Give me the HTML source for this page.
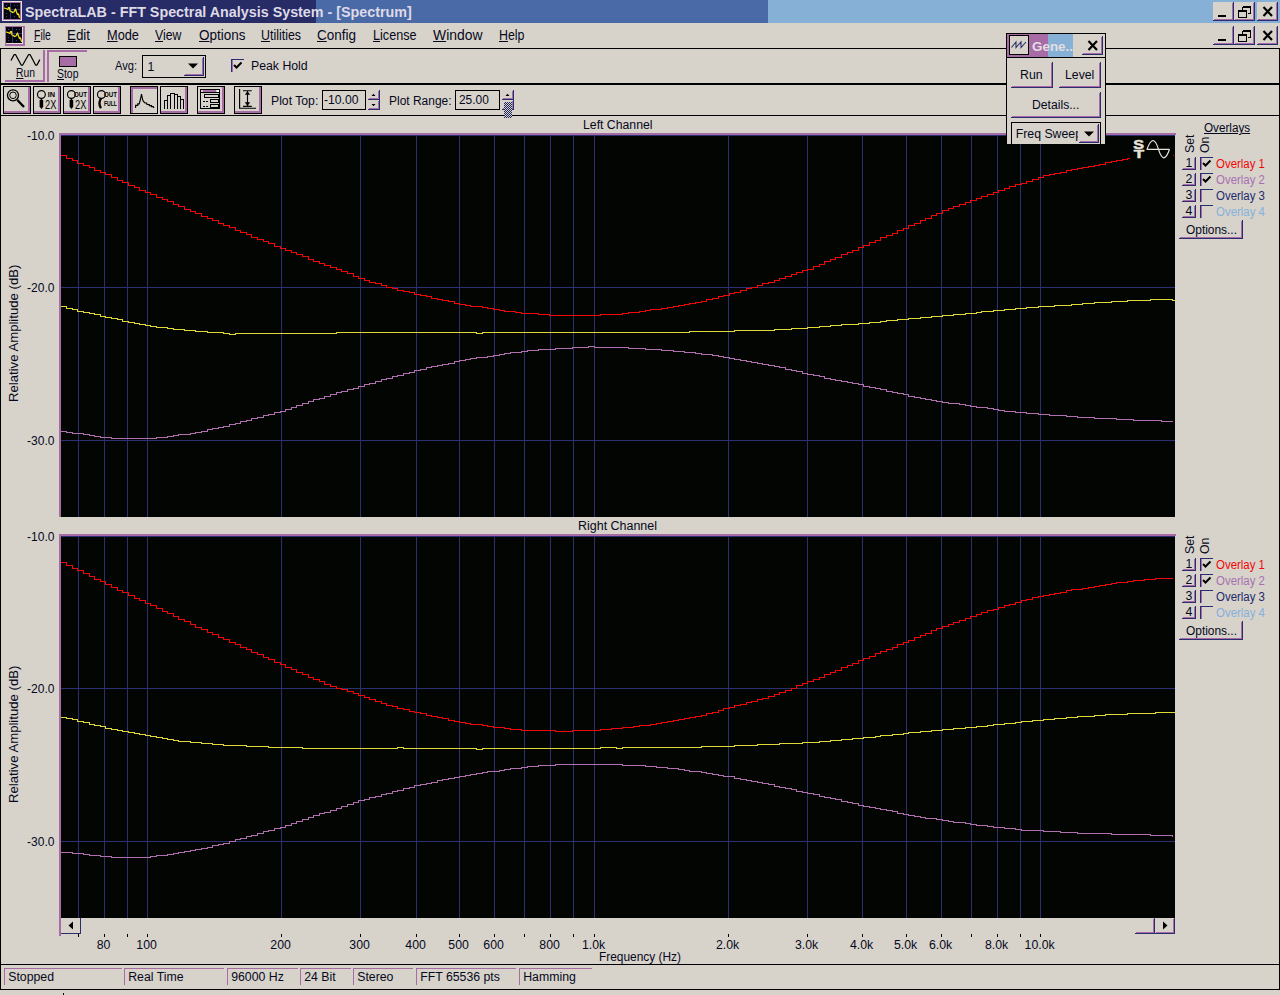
<!DOCTYPE html>
<html lang="en"><head><meta charset="utf-8"><title>SpectraLAB - FFT Spectral Analysis System - [Spectrum]</title>
<style>
html,body{margin:0;padding:0}
body{width:1280px;height:995px;overflow:hidden;background:#d7d3cb;font-family:"Liberation Sans",sans-serif;font-size:12px;color:#06081c;position:relative}
div,span,svg{position:absolute;box-sizing:border-box}
.t{white-space:nowrap;line-height:1}
u{text-decoration:underline;text-underline-offset:1px}
.hl{background:#000}
.btn{background:#d7d3cb;border-right:1px solid #2a2e6e;border-bottom:1px solid #2a2e6e}
.btn:before{content:"";position:absolute;right:0;bottom:0;left:1px;height:1px;background:#a76ba6}
.btn:after{content:"";position:absolute;right:0;bottom:0;top:1px;width:1px;background:#a76ba6}
.tb{border:1px solid #000;background:#d7d3cb}
.tb i{position:absolute;display:block}
.tb .r{right:0;top:0;bottom:0;width:2px;background:#a76ba6}
.tb .b{left:0;right:0;bottom:0;height:2px;background:#a76ba6}
.tb .l{left:0;top:0;bottom:0;width:2px;background:#a76ba6}
.tb .tp{left:0;right:0;top:0;height:2px;background:#a76ba6}
.sf{top:968px;height:17px;border-top:1px solid #a76ba6;border-left:1px solid #a76ba6}
.sf span{left:4px;top:3px;font-size:12.3px;white-space:nowrap;line-height:1}
.cb{width:13px;height:13px;border-top:1px solid #2a2e6e;border-left:1px solid #2a2e6e}
.cb:before{content:"";position:absolute;left:0;top:0;width:1px;height:12px;background:#a76ba6}
.plot{overflow:visible}
</style></head><body>

<div style="left:0;top:0;width:316px;height:23px;background:#272b66"></div>
<div style="left:316px;top:0;width:452px;height:23px;background:#4a69a7"></div>
<div style="left:768px;top:0;width:512px;height:23px;background:#86b0d5"></div>
<span class="t" style="left:25px;top:5px;font-size:14.6px;transform-origin:0 0;transform:scaleX(0.9808);font-weight:bold;color:#dedae6;">SpectraLAB - FFT Spectral Analysis System - [Spectrum]</span>
<svg style="left:2px;top:1px" width="20" height="20" viewBox="2 1 20 20"><rect x="2" y="1" width="20" height="20" fill="#e6e2d6"/><rect x="3" y="2" width="18" height="18" fill="#a76ba6"/><rect x="4" y="3" width="16" height="16" fill="#05050c"/><path d="M10.5 3V19M11 9.5H20" stroke="#2b3178" stroke-width="1"/><rect x="6" y="5" width="1" height="1" fill="#3a4494"/><rect x="14" y="5" width="1" height="1" fill="#3a4494"/><rect x="17" y="5" width="1" height="1" fill="#3a4494"/><rect x="6" y="13" width="1" height="1" fill="#3a4494"/><rect x="6" y="16" width="1" height="1" fill="#3a4494"/><rect x="14" y="16" width="1" height="1" fill="#3a4494"/><rect x="17" y="13" width="1" height="1" fill="#3a4494"/><path d="M4 8L6 8.5L8 9.5L8.5 7.5L9.5 7.5L10 11L11.5 11.5L12.5 12.5L14 12L15.5 9L16.5 12L17.5 14.5L18.5 14L19.6 17.8" stroke="#f4e428" stroke-width="1.250" fill="none" stroke-linejoin="round"/></svg>
<svg style="left:5px;top:26px" width="20" height="20" viewBox="5 26 20 20"><rect x="5" y="26" width="20" height="20" fill="#a76ba6"/><rect x="6" y="27" width="17" height="17" fill="#e6e2d6"/><rect x="6" y="27" width="16" height="16" fill="#05050c"/><path d="M12.5 27V43M13 33.5H22" stroke="#2b3178" stroke-width="1"/><rect x="8" y="29" width="1" height="1" fill="#3a4494"/><rect x="16" y="29" width="1" height="1" fill="#3a4494"/><rect x="19" y="29" width="1" height="1" fill="#3a4494"/><rect x="8" y="37" width="1" height="1" fill="#3a4494"/><rect x="8" y="40" width="1" height="1" fill="#3a4494"/><rect x="16" y="40" width="1" height="1" fill="#3a4494"/><rect x="19" y="37" width="1" height="1" fill="#3a4494"/><path d="M6 32L8 32.5L10 33.5L10.5 31.5L11.5 31.5L12 35L13.5 35.5L14.5 36.5L16 36L17.5 33L18.5 36L19.5 38.5L20.5 38L21.6 41.8" stroke="#f4e428" stroke-width="1.250" fill="none" stroke-linejoin="round"/></svg>
<div class="btn" style="left:1213px;top:2px;width:21px;height:19px"></div><div class="btn" style="left:1234px;top:2px;width:21px;height:19px"></div><div class="btn" style="left:1257px;top:2px;width:21px;height:19px"></div><div class="hl" style="left:1218px;top:15px;width:8px;height:2px"></div><svg style="left:1234px;top:2px" width="21" height="19" viewBox="0 0 21 19" shape-rendering="crispEdges"><path d="M8.500 4.500H16.500M8.500 5.500H16.500V11.500H13.500M8.500 5V8M4 8.500H13M4.500 9.500H12.500V15.500H4.500Z" stroke="#000" stroke-width="1" fill="none"/></svg><svg style="left:1257px;top:2px" width="21" height="19" viewBox="0 0 21 19"><path d="M6.5 5L15 14M15 5L6.5 14" stroke="#000" stroke-width="2.2" fill="none"/></svg>
<div class="btn" style="left:1213px;top:26px;width:21px;height:19px"></div><div class="btn" style="left:1234px;top:26px;width:21px;height:19px"></div><div class="btn" style="left:1257px;top:26px;width:21px;height:19px"></div><div class="hl" style="left:1218px;top:39px;width:8px;height:2px"></div><svg style="left:1234px;top:26px" width="21" height="19" viewBox="0 0 21 19" shape-rendering="crispEdges"><path d="M8.500 4.500H16.500M8.500 5.500H16.500V11.500H13.500M8.500 5V8M4 8.500H13M4.500 9.500H12.500V15.500H4.500Z" stroke="#000" stroke-width="1" fill="none"/></svg><svg style="left:1257px;top:26px" width="21" height="19" viewBox="0 0 21 19"><path d="M6.5 5L15 14M15 5L6.5 14" stroke="#000" stroke-width="2.2" fill="none"/></svg>
<span class="t" style="left:33.8px;top:29px;font-size:13.9px;transform-origin:0 0;transform:scaleX(0.7500);"><u>F</u>ile</span>
<span class="t" style="left:67px;top:29px;font-size:13.9px;transform-origin:0 0;transform:scaleX(0.9602);"><u>E</u>dit</span>
<span class="t" style="left:106.5px;top:29px;font-size:13.9px;transform-origin:0 0;transform:scaleX(0.9203);"><u>M</u>ode</span>
<span class="t" style="left:155px;top:29px;font-size:13.9px;transform-origin:0 0;transform:scaleX(0.8869);"><u>V</u>iew</span>
<span class="t" style="left:198.5px;top:29px;font-size:13.9px;transform-origin:0 0;transform:scaleX(0.9707);"><u>O</u>ptions</span>
<span class="t" style="left:261px;top:29px;font-size:13.9px;transform-origin:0 0;transform:scaleX(0.8929);"><u>U</u>tilities</span>
<span class="t" style="left:317px;top:29px;font-size:13.9px;transform-origin:0 0;transform:scaleX(0.9706);"><u>C</u>onfig</span>
<span class="t" style="left:372.5px;top:29px;font-size:13.9px;transform-origin:0 0;transform:scaleX(0.9079);"><u>L</u>icense</span>
<span class="t" style="left:432.5px;top:29px;font-size:13.9px;transform-origin:0 0;transform:scaleX(1.0012);"><u>W</u>indow</span>
<span class="t" style="left:498.5px;top:29px;font-size:13.9px;transform-origin:0 0;transform:scaleX(0.8920);"><u>H</u>elp</span>
<div class="hl" style="left:0;top:48px;width:1280px;height:1px"></div>
<div class="hl" style="left:0;top:48px;width:1px;height:942px"></div>
<div class="hl" style="left:1279px;top:48px;width:1px;height:942px"></div>
<div class="hl" style="left:0;top:83px;width:1280px;height:2px"></div>
<div class="hl" style="left:0;top:115px;width:1280px;height:1px"></div>
<div class="hl" style="left:0;top:964px;width:1280px;height:1px"></div>
<div class="hl" style="left:0;top:989px;width:1280px;height:1px"></div>
<div style="left:5px;top:50px;width:40px;height:32px;border-right:2px solid #a76ba6;border-bottom:2px solid #a76ba6"></div>
<svg style="left:8px;top:52px" width="34" height="16" viewBox="8 52 34 16"><path d="M11 60.500L14.200 54.500L15.500 54.500L21.200 65L22.700 65L28.600 54.500L30 54.500L35.600 65L37 65L39.800 59.600" stroke="#000" stroke-width="1.25" fill="none" stroke-linejoin="round"/></svg>
<span class="t" style="left:16px;top:67px;font-size:12.3px;transform-origin:0 0;transform:scaleX(0.8420);"><u>R</u>un</span>
<div style="left:47px;top:50px;width:40px;height:32px;border-left:2px solid #a76ba6;border-top:2px solid #a76ba6"></div>
<div style="left:59px;top:56px;width:18px;height:11px;background:#a76ba6;border:1px solid #000"></div>
<span class="t" style="left:56.5px;top:68px;font-size:12.3px;transform-origin:0 0;transform:scaleX(0.8497);"><u>S</u>top</span>
<span class="t" style="left:114.6px;top:60px;font-size:12.3px;transform-origin:0 0;transform:scaleX(0.9020);">Avg:</span>
<div style="left:142px;top:55px;width:64px;height:23px;border:1px solid #000"></div>
<span class="t" style="left:147.5px;top:61px;font-size:12.3px;">1</span>
<div class="btn" style="left:184px;top:57px;width:20px;height:19px"></div>
<svg style="left:186px;top:62px" width="14" height="8" viewBox="0 0 14 8"><path d="M2 1.5H12L7 6.5Z" fill="#000"/></svg>
<div class="cb" style="left:231px;top:59px"></div>
<svg style="left:233px;top:61px" width="10" height="10" viewBox="0 0 10 10"><path d="M1 4L3.5 6.5L8.5 1.5" stroke="#000" stroke-width="2" fill="none"/></svg>
<span class="t" style="left:251.3px;top:60px;font-size:12.3px;transform-origin:0 0;transform:scaleX(0.9991);">Peak Hold</span>
<div class="tb" style="left:3px;top:86px;width:28px;height:28px"><i class="r"></i><i class="b"></i><svg style="left:0;top:0" width="26" height="26" viewBox="4 87 26 26"><circle cx="13" cy="95.300" r="5.500" stroke="#000" stroke-width="1.3" fill="none"/><circle cx="13" cy="95.300" r="3.300" stroke="#000" stroke-width="1" fill="none"/><path d="M17.300 100L24 107" stroke="#000" stroke-width="2.400"/></svg></div>
<div class="tb" style="left:33px;top:86px;width:28px;height:28px"><i class="r"></i><i class="b"></i><svg style="left:0;top:0" width="26" height="26" viewBox="34 87 26 26"><circle cx="41.4" cy="94.500" r="3.900" stroke="#000" stroke-width="1.150" fill="none"/><path d="M41.4 98.400V100.300" stroke="#000" stroke-width="1.600"/><path d="M39.6 100.100H43.199999999999996V106.800L41.4 108.900L39.6 106.800Z" fill="#000"/><text x="47.85" y="97.300" font-size="7.300" font-weight="bold" font-family="Liberation Sans,sans-serif" textLength="7.3" lengthAdjust="spacingAndGlyphs">IN</text><text x="45" y="108.750" font-size="12" font-family="Liberation Sans,sans-serif" textLength="11.300" lengthAdjust="spacingAndGlyphs">2X</text></svg></div>
<div class="tb" style="left:63px;top:86px;width:28px;height:28px"><i class="r"></i><i class="b"></i><svg style="left:0;top:0" width="26" height="26" viewBox="64 87 26 26"><circle cx="71.4" cy="94.500" r="3.900" stroke="#000" stroke-width="1.150" fill="none"/><path d="M71.4 98.400V100.300" stroke="#000" stroke-width="1.600"/><path d="M69.60000000000001 100.100H73.2V106.800L71.4 108.900L69.60000000000001 106.800Z" fill="#000"/><text x="73.9" y="97.300" font-size="7.300" font-weight="bold" font-family="Liberation Sans,sans-serif" textLength="13.1" lengthAdjust="spacingAndGlyphs">OUT</text><text x="75" y="108.750" font-size="12" font-family="Liberation Sans,sans-serif" textLength="11.300" lengthAdjust="spacingAndGlyphs">2X</text></svg></div>
<div class="tb" style="left:93px;top:86px;width:28px;height:28px"><i class="r"></i><i class="b"></i><svg style="left:0;top:0" width="26" height="26" viewBox="94 87 26 26"><circle cx="101.4" cy="94.500" r="3.900" stroke="#000" stroke-width="1.150" fill="none"/><path d="M101.10000000000001 98.400C98.80000000000001 101.500 99.10000000000001 105 100.9 108.300" stroke="#000" stroke-width="2.300" fill="none"/><text x="103.9" y="97.300" font-size="7.300" font-weight="bold" font-family="Liberation Sans,sans-serif" textLength="13.100" lengthAdjust="spacingAndGlyphs">OUT</text><text x="103.9" y="106.100" font-size="6.400" font-weight="bold" font-family="Liberation Sans,sans-serif" textLength="13.100" lengthAdjust="spacingAndGlyphs">FULL</text></svg></div>
<div class="tb" style="left:130px;top:86px;width:28px;height:28px"><i class="l"></i><i class="tp"></i><svg style="left:0;top:0" width="26" height="26" viewBox="131 87 26 26"><path d="M135.600 108V105.300H137.800V103.800H139.200L140.300 100L141.500 94L142.600 99.500L143.400 101.500L145 103H146.600L147 104.500H149.300V105.600H151.500V106.600H153.200L154 107.900" stroke="#000" stroke-width="1.150" fill="none"/></svg></div>
<div class="tb" style="left:160px;top:86px;width:28px;height:28px"><i class="r"></i><i class="b"></i><svg style="left:0;top:0" width="26" height="26" viewBox="161 87 26 26"><path d="M164.5 100.5H167.5M167.5 95.5H170.5M170.5 93.5H174.5M174.5 94.5H177.5M177.5 96.5H180.5M180.5 99.5H183.5M164.5 100.0V109M167.5 95.0V109M170.5 93.0V109M174.5 93.0V109M177.5 94.0V109M180.5 96.0V109M183.5 99.0V109" stroke="#000" stroke-width="1" fill="none" shape-rendering="crispEdges"/></svg></div>
<div class="tb" style="left:197px;top:86px;width:28px;height:28px"><i class="r"></i><i class="b"></i><svg style="left:0;top:0" width="26" height="26" viewBox="198 87 26 26"><g shape-rendering="crispEdges"><rect x="200.500" y="89.500" width="19" height="19" stroke="#000" stroke-width="1" fill="none"/><rect x="203" y="90" width="13" height="2" fill="#a76ba6"/><rect x="217" y="90" width="2" height="2" fill="#fff"/><path d="M201 92.500H219" stroke="#000"/><rect x="204.500" y="94.500" width="14" height="3" stroke="#000" fill="none"/><rect x="210.500" y="99.500" width="8" height="3" stroke="#000" fill="none"/><rect x="210.500" y="104.500" width="8" height="3" stroke="#000" fill="none"/><path d="M203 101.500H209M203 106.500H209" stroke="#000" stroke-dasharray="2 1"/></g></svg></div>
<div class="tb" style="left:234px;top:86px;width:28px;height:28px"><i class="r"></i><i class="b"></i><svg style="left:0;top:0" width="26" height="26" viewBox="235 87 26 26"><path d="M239.600 89V108.200H256" stroke="#000" stroke-width="1.150" fill="none"/><path d="M243 90.750H251.800M243 106.300H251.800M247.500 91V106" stroke="#000" stroke-width="1.150"/><path d="M244.800 94.800L247.500 91.200L250.200 94.800ZM244.800 102.300L247.500 105.900L250.200 102.300Z" fill="#000"/></svg></div>
<span class="t" style="left:271.2px;top:95px;font-size:12.3px;transform-origin:0 0;transform:scaleX(0.9929);">Plot Top:</span>
<div style="left:322px;top:90px;width:44px;height:20px;border:1px solid #000"></div>
<span class="t" style="left:324.3px;top:94px;font-size:12.3px;transform-origin:0 0;transform:scaleX(0.9892);">-10.00</span>
<span class="t" style="left:389.4px;top:95px;font-size:12.3px;transform-origin:0 0;transform:scaleX(0.9739);">Plot Range:</span>
<div style="left:455px;top:90px;width:45px;height:20px;border:1px solid #000"></div>
<span class="t" style="left:458.5px;top:94px;font-size:12.3px;transform-origin:0 0;transform:scaleX(0.9681);">25.00</span>
<div class="btn" style="left:368px;top:90px;width:12px;height:10px"></div><div class="btn" style="left:368px;top:100px;width:12px;height:10px"></div><svg style="left:368px;top:90px" width="12" height="20" viewBox="0 0 12 20"><path d="M3.500 6L5.500 3.800L7.500 6ZM3.500 14L5.500 16.200L7.500 14Z" fill="#000"/></svg>
<div class="btn" style="left:502px;top:90px;width:12px;height:10px"></div><div class="btn" style="left:502px;top:100px;width:12px;height:10px"></div><svg style="left:502px;top:90px" width="12" height="20" viewBox="0 0 12 20"><path d="M3.500 6L5.500 3.800L7.500 6ZM3.500 14L5.500 16.200L7.500 14Z" fill="#000"/></svg>
<div style="left:504px;top:102px;width:8px;height:16px;background:repeating-conic-gradient(#20245c 0 25%,#d7d3cb 0 50%) 0 0/2px 2px"></div>
<span class="t" style="left:583px;top:119px;font-size:12.3px;transform-origin:0 0;transform:scaleX(0.9964);">Left Channel</span>
<span class="t" style="left:578px;top:520px;font-size:12.3px;transform-origin:0 0;transform:scaleX(1.0134);">Right Channel</span>
<svg class="plot" style="left:0;top:133px" width="1180" height="385" viewBox="0 133 1180 385" shape-rendering="crispEdges">
<rect x="59" y="133" width="1117" height="2" fill="#a76ba6"/>
<rect x="59" y="133" width="2" height="384" fill="#a76ba6"/>
<rect x="61" y="135" width="1114" height="382" fill="#030503"/>
<path d="M78.5 135V517M104.5 135V517M127.5 135V517M147.5 135V517M281.5 135V517M360.5 135V517M416.5 135V517M459.5 135V517M494.5 135V517M524.5 135V517M550.5 135V517M573.5 135V517M594.5 135V517M728.5 135V517M807.5 135V517M862.5 135V517M906.5 135V517M941.5 135V517M971.5 135V517M997.5 135V517M1020.5 135V517M1040.5 135V517M61 135.5H1175M61 287.5H1175M61 440.5H1175" stroke="#2b3170" stroke-width="1" fill="none"/>
<path d="M61.0 306.5H66.6V308.5H72.2V309.5H77.8V311.5H83.5V312.5H89.1V313.5H94.7V314.5H100.3V316.5H105.9V317.5H111.5V318.5H117.1V319.5H122.8V321.5H128.4V322.5H134.0V323.5H139.6V324.5H145.2V325.5H150.8V326.5H156.5V327.5H167.7V328.5H173.3V329.5H184.5V330.5H195.8V331.5H207.0V332.5H223.8V333.5H229.5V334.5H235.1V333.5H336.1V332.5H476.5V333.5H482.1V332.5H689.9V331.5H734.8V330.5H774.1V329.5H791.0V328.5H807.8V327.5H819.0V326.5H830.3V325.5H841.5V324.5H858.3V323.5H869.6V322.5H880.8V321.5H886.4V320.5H897.6V319.5H908.9V318.5H920.1V317.5H931.3V316.5H942.6V315.5H953.8V314.5H965.0V313.5H976.2V312.5H981.9V311.5H993.1V310.5H1004.3V309.5H1015.6V308.5H1026.8V307.5H1038.0V306.5H1054.9V305.5H1071.7V304.5H1082.9V303.5H1094.2V302.5H1111.0V301.5H1127.9V300.5H1150.3V299.5H1172.8V300.5H1175.0" stroke="#e0d838" stroke-width="1" fill="none"/>
<path d="M61.0 431.5H66.6V432.5H72.2V433.5H83.5V434.5H89.1V435.5H94.7V436.5H100.3V437.5H111.5V438.5H156.5V437.5H167.7V436.5H173.3V435.5H178.9V434.5H190.1V433.5H195.8V432.5H201.4V431.5H207.0V429.5H212.6V428.5H218.2V427.5H223.8V426.5H229.5V424.5H235.1V423.5H240.7V421.5H246.3V420.5H251.9V418.5H257.5V417.5H263.1V415.5H268.8V414.5H274.4V412.5H280.0V411.5H285.6V409.5H291.2V407.5H296.8V405.5H302.4V403.5H308.1V401.5H313.7V399.5H319.3V398.5H324.9V396.5H330.5V394.5H336.1V392.5H341.8V391.5H347.4V389.5H353.0V388.5H358.6V386.5H364.2V384.5H369.8V383.5H375.4V381.5H381.1V379.5H386.7V378.5H392.3V376.5H397.9V375.5H403.5V373.5H409.1V372.5H414.7V370.5H420.4V369.5H426.0V367.5H431.6V366.5H437.2V365.5H442.8V364.5H448.4V363.5H454.1V361.5H459.7V360.5H465.3V359.5H470.9V358.5H476.5V357.5H487.7V356.5H493.4V355.5H499.0V354.5H504.6V353.5H510.2V352.5H521.4V351.5H527.0V350.5H538.3V349.5H555.1V348.5H572.0V347.5H588.8V346.5H594.4V347.5H628.1V348.5H645.0V349.5H661.8V350.5H673.0V351.5H684.3V352.5H695.5V353.5H701.1V354.5H712.3V355.5H718.0V356.5H723.6V357.5H729.2V358.5H734.8V359.5H740.4V360.5H746.0V361.5H751.6V362.5H757.3V363.5H762.9V364.5H768.5V365.5H774.1V366.5H779.7V367.5H785.3V369.5H791.0V370.5H796.6V371.5H802.2V373.5H807.8V374.5H813.4V375.5H819.0V376.5H824.6V378.5H830.3V379.5H835.9V380.5H841.5V381.5H847.1V382.5H852.7V383.5H858.3V384.5H863.9V386.5H869.6V387.5H875.2V388.5H880.8V389.5H886.4V391.5H892.0V392.5H897.6V393.5H903.3V394.5H908.9V396.5H914.5V397.5H920.1V398.5H925.7V399.5H931.3V400.5H936.9V401.5H942.6V402.5H948.2V403.5H959.4V404.5H965.0V405.5H970.6V406.5H976.2V407.5H987.5V408.5H993.1V409.5H998.7V410.5H1004.3V411.5H1015.6V412.5H1026.8V413.5H1038.0V414.5H1049.2V415.5H1066.1V416.5H1077.3V417.5H1094.2V418.5H1116.6V419.5H1133.5V420.5H1161.5V421.5H1173.0" stroke="#b070b0" stroke-width="1" fill="none"/>
<path d="M61.0 155.5H66.6V158.5H72.2V160.5H77.8V163.5H83.5V165.5H89.1V167.5H94.7V170.5H100.3V172.5H105.9V174.5H111.5V177.5H117.1V180.5H122.8V182.5H128.4V185.5H134.0V187.5H139.6V190.5H145.2V192.5H150.8V194.5H156.5V197.5H162.1V199.5H167.7V201.5H173.3V204.5H178.9V206.5H184.5V209.5H190.1V211.5H195.8V213.5H201.4V216.5H207.0V218.5H212.6V220.5H218.2V223.5H223.8V225.5H229.5V227.5H235.1V230.5H240.7V232.5H246.3V234.5H251.9V237.5H257.5V239.5H263.1V241.5H268.8V243.5H274.4V246.5H280.0V248.5H285.6V250.5H291.2V252.5H296.8V254.5H302.4V256.5H308.1V259.5H313.7V261.5H319.3V263.5H324.9V265.5H330.5V267.5H336.1V269.5H341.8V271.5H347.4V273.5H353.0V276.5H358.6V278.5H364.2V280.5H369.8V282.5H375.4V283.5H381.1V285.5H386.7V287.5H392.3V288.5H397.9V290.5H403.5V291.5H409.1V292.5H414.7V294.5H420.4V295.5H426.0V296.5H431.6V298.5H437.2V299.5H442.8V300.5H448.4V301.5H454.1V303.5H459.7V304.5H465.3V305.5H470.9V306.5H482.1V307.5H487.7V308.5H493.4V309.5H499.0V310.5H504.6V311.5H515.8V312.5H521.4V313.5H538.3V314.5H549.5V315.5H600.0V314.5H622.5V313.5H628.1V312.5H639.3V311.5H645.0V310.5H650.6V309.5H661.8V308.5H667.4V307.5H673.0V306.5H678.7V305.5H684.3V304.5H689.9V303.5H695.5V302.5H701.1V301.5H706.7V299.5H712.3V298.5H718.0V296.5H723.6V295.5H729.2V293.5H734.8V292.5H740.4V290.5H746.0V288.5H751.6V287.5H757.3V285.5H762.9V283.5H768.5V282.5H774.1V280.5H779.7V278.5H785.3V276.5H791.0V274.5H796.6V272.5H802.2V270.5H807.8V269.5H813.4V266.5H819.0V264.5H824.6V261.5H830.3V259.5H835.9V257.5H841.5V254.5H847.1V252.5H852.7V250.5H858.3V247.5H863.9V245.5H869.6V242.5H875.2V240.5H880.8V237.5H886.4V235.5H892.0V233.5H897.6V230.5H903.3V228.5H908.9V225.5H914.5V223.5H920.1V220.5H925.7V218.5H931.3V215.5H936.9V213.5H942.6V210.5H948.2V208.5H953.8V206.5H959.4V204.5H965.0V202.5H970.6V200.5H976.2V198.5H981.9V196.5H987.5V194.5H993.1V192.5H998.7V190.5H1004.3V188.5H1009.9V186.5H1015.6V184.5H1021.2V183.5H1026.8V181.5H1032.4V179.5H1038.0V177.5H1043.6V175.5H1049.2V174.5H1054.9V173.5H1060.5V172.5H1066.1V170.5H1071.7V169.5H1077.3V168.5H1082.9V167.5H1088.5V166.5H1094.2V165.5H1099.8V164.5H1105.4V162.5H1111.0V161.5H1116.6V160.5H1122.2V159.5H1127.9V158.5H1130.0" stroke="#f00808" stroke-width="1" fill="none"/>
</svg>
<svg class="plot" style="left:0;top:534px" width="1180" height="385" viewBox="0 534 1180 385" shape-rendering="crispEdges">
<rect x="59" y="534" width="1117" height="2" fill="#a76ba6"/>
<rect x="59" y="534" width="2" height="384" fill="#a76ba6"/>
<rect x="61" y="536" width="1114" height="382" fill="#030503"/>
<path d="M78.5 536V918M104.5 536V918M127.5 536V918M147.5 536V918M281.5 536V918M360.5 536V918M416.5 536V918M459.5 536V918M494.5 536V918M524.5 536V918M550.5 536V918M573.5 536V918M594.5 536V918M728.5 536V918M807.5 536V918M862.5 536V918M906.5 536V918M941.5 536V918M971.5 536V918M997.5 536V918M1020.5 536V918M1040.5 536V918M61 536.5H1175M61 688.5H1175M61 841.5H1175" stroke="#2b3170" stroke-width="1" fill="none"/>
<path d="M61.0 717.5H66.6V718.5H72.2V719.5H77.8V721.5H83.5V722.5H89.1V724.5H94.7V725.5H100.3V726.5H105.9V728.5H111.5V729.5H117.1V730.5H122.8V731.5H128.4V732.5H134.0V733.5H139.6V734.5H145.2V735.5H150.8V736.5H156.5V737.5H162.1V738.5H167.7V739.5H173.3V740.5H178.9V741.5H190.1V742.5H201.4V743.5H212.6V744.5H223.8V745.5H246.3V746.5H268.8V747.5H302.4V748.5H397.9V747.5H403.5V748.5H476.5V749.5H482.1V748.5H600.0V747.5H616.9V748.5H622.5V747.5H701.1V746.5H734.8V745.5H757.3V744.5H779.7V743.5H802.2V742.5H819.0V741.5H830.3V740.5H841.5V739.5H852.7V738.5H863.9V737.5H875.2V736.5H880.8V735.5H892.0V734.5H903.3V733.5H908.9V732.5H920.1V731.5H931.3V730.5H942.6V729.5H953.8V728.5H965.0V727.5H976.2V726.5H987.5V725.5H993.1V724.5H1004.3V723.5H1015.6V722.5H1021.2V721.5H1032.4V720.5H1043.6V719.5H1054.9V718.5H1066.1V717.5H1077.3V716.5H1094.2V715.5H1105.4V714.5H1127.9V713.5H1155.9V712.5H1175.0" stroke="#e0d838" stroke-width="1" fill="none"/>
<path d="M61.0 852.5H72.2V853.5H83.5V854.5H89.1V855.5H100.3V856.5H111.5V857.5H150.8V856.5H156.5V855.5H167.7V854.5H173.3V853.5H178.9V852.5H184.5V851.5H190.1V850.5H195.8V849.5H201.4V848.5H207.0V847.5H212.6V845.5H218.2V844.5H223.8V843.5H229.5V841.5H235.1V839.5H240.7V838.5H246.3V836.5H251.9V835.5H257.5V833.5H263.1V831.5H268.8V830.5H274.4V828.5H280.0V827.5H285.6V825.5H291.2V823.5H296.8V821.5H302.4V819.5H308.1V817.5H313.7V815.5H319.3V813.5H324.9V812.5H330.5V810.5H336.1V808.5H341.8V806.5H347.4V804.5H353.0V802.5H358.6V800.5H364.2V799.5H369.8V797.5H375.4V796.5H381.1V794.5H386.7V793.5H392.3V791.5H397.9V790.5H403.5V788.5H409.1V787.5H414.7V785.5H420.4V784.5H426.0V783.5H431.6V782.5H437.2V780.5H442.8V779.5H448.4V778.5H454.1V777.5H459.7V776.5H465.3V775.5H470.9V774.5H476.5V773.5H482.1V772.5H487.7V771.5H499.0V770.5H504.6V769.5H510.2V768.5H521.4V767.5H527.0V766.5H538.3V765.5H555.1V764.5H622.5V765.5H645.0V766.5H656.2V767.5H667.4V768.5H678.7V769.5H684.3V770.5H689.9V771.5H701.1V772.5H706.7V773.5H712.3V774.5H718.0V775.5H723.6V776.5H734.8V778.5H740.4V779.5H746.0V780.5H751.6V781.5H757.3V782.5H762.9V783.5H768.5V784.5H774.1V786.5H779.7V787.5H785.3V788.5H791.0V789.5H796.6V791.5H802.2V792.5H807.8V793.5H813.4V794.5H819.0V796.5H824.6V797.5H830.3V798.5H835.9V799.5H841.5V801.5H847.1V802.5H852.7V803.5H858.3V805.5H863.9V806.5H869.6V807.5H875.2V808.5H880.8V809.5H886.4V810.5H892.0V811.5H897.6V813.5H903.3V814.5H908.9V815.5H914.5V816.5H920.1V817.5H925.7V818.5H936.9V819.5H942.6V820.5H948.2V821.5H953.8V822.5H965.0V823.5H970.6V824.5H976.2V825.5H987.5V826.5H993.1V827.5H1004.3V828.5H1015.6V829.5H1021.2V830.5H1043.6V831.5H1060.5V832.5H1077.3V833.5H1111.0V834.5H1150.3V835.5H1172.8V836.5H1173.0" stroke="#b070b0" stroke-width="1" fill="none"/>
<path d="M61.0 562.5H66.6V565.5H72.2V568.5H77.8V570.5H83.5V573.5H89.1V576.5H94.7V579.5H100.3V581.5H105.9V584.5H111.5V587.5H117.1V590.5H122.8V592.5H128.4V595.5H134.0V598.5H139.6V600.5H145.2V603.5H150.8V605.5H156.5V608.5H162.1V611.5H167.7V613.5H173.3V616.5H178.9V619.5H184.5V621.5H190.1V624.5H195.8V627.5H201.4V629.5H207.0V632.5H212.6V634.5H218.2V637.5H223.8V639.5H229.5V642.5H235.1V644.5H240.7V647.5H246.3V649.5H251.9V652.5H257.5V654.5H263.1V657.5H268.8V659.5H274.4V662.5H280.0V664.5H285.6V667.5H291.2V669.5H296.8V672.5H302.4V674.5H308.1V677.5H313.7V679.5H319.3V681.5H324.9V684.5H330.5V686.5H336.1V688.5H341.8V689.5H347.4V691.5H353.0V693.5H358.6V695.5H364.2V697.5H369.8V699.5H375.4V701.5H381.1V703.5H386.7V705.5H392.3V706.5H397.9V708.5H403.5V709.5H409.1V711.5H414.7V712.5H420.4V713.5H426.0V715.5H431.6V716.5H437.2V717.5H442.8V718.5H448.4V720.5H454.1V721.5H459.7V722.5H465.3V723.5H470.9V724.5H482.1V725.5H487.7V726.5H493.4V727.5H504.6V728.5H510.2V729.5H521.4V730.5H555.1V731.5H572.0V730.5H600.0V729.5H611.3V728.5H622.5V727.5H633.7V726.5H639.3V725.5H650.6V724.5H656.2V723.5H661.8V722.5H667.4V721.5H673.0V720.5H678.7V719.5H684.3V718.5H689.9V717.5H695.5V716.5H701.1V715.5H706.7V713.5H712.3V712.5H718.0V710.5H723.6V708.5H729.2V707.5H734.8V705.5H740.4V704.5H746.0V702.5H751.6V701.5H757.3V699.5H762.9V698.5H768.5V696.5H774.1V694.5H779.7V692.5H785.3V690.5H791.0V688.5H796.6V685.5H802.2V683.5H807.8V681.5H813.4V679.5H819.0V677.5H824.6V674.5H830.3V672.5H835.9V670.5H841.5V667.5H847.1V665.5H852.7V663.5H858.3V660.5H863.9V658.5H869.6V656.5H875.2V653.5H880.8V651.5H886.4V649.5H892.0V647.5H897.6V644.5H903.3V642.5H908.9V640.5H914.5V637.5H920.1V635.5H925.7V633.5H931.3V630.5H936.9V628.5H942.6V626.5H948.2V624.5H953.8V622.5H959.4V620.5H965.0V618.5H970.6V616.5H976.2V614.5H981.9V612.5H987.5V610.5H993.1V609.5H998.7V607.5H1004.3V605.5H1009.9V604.5H1015.6V602.5H1021.2V600.5H1026.8V599.5H1032.4V597.5H1038.0V596.5H1043.6V595.5H1049.2V594.5H1054.9V593.5H1060.5V592.5H1066.1V590.5H1071.7V589.5H1082.9V588.5H1088.5V587.5H1094.2V586.5H1099.8V585.5H1105.4V584.5H1111.0V583.5H1116.6V582.5H1127.9V581.5H1133.5V580.5H1144.7V579.5H1155.9V578.5H1173.0" stroke="#f00808" stroke-width="1" fill="none"/>
</svg>
<span class="t" style="left:27px;top:130px;font-size:12.3px;transform-origin:0 0;transform:scaleX(0.9809);">-10.0</span>
<span class="t" style="left:27px;top:282px;font-size:12.3px;transform-origin:0 0;transform:scaleX(0.9809);">-20.0</span>
<span class="t" style="left:27px;top:435px;font-size:12.3px;transform-origin:0 0;transform:scaleX(0.9809);">-30.0</span>
<span class="t" style="left:6.73px;top:401.5px;font-size:13.2px;transform-origin:0 0;transform:rotate(-90deg) scaleX(0.9968)">Relative Amplitude (dB)</span>
<span class="t" style="left:27px;top:531px;font-size:12.3px;transform-origin:0 0;transform:scaleX(0.9809);">-10.0</span>
<span class="t" style="left:27px;top:683px;font-size:12.3px;transform-origin:0 0;transform:scaleX(0.9809);">-20.0</span>
<span class="t" style="left:27px;top:836px;font-size:12.3px;transform-origin:0 0;transform:scaleX(0.9809);">-30.0</span>
<span class="t" style="left:6.73px;top:802.5px;font-size:13.2px;transform-origin:0 0;transform:rotate(-90deg) scaleX(0.9968)">Relative Amplitude (dB)</span>
<div style="left:1173px;top:155px;width:1px;height:1px;background:#f00808"></div>
<svg style="left:1130px;top:138px" width="44" height="24" viewBox="1130 138 44 24"><text x="1133.300" y="149" font-size="12.800" font-weight="bold" font-family="Liberation Sans,sans-serif" fill="#e8e4dc" stroke="#e8e4dc" stroke-width="0.500" textLength="10.800" lengthAdjust="spacingAndGlyphs">S</text><text x="1133.800" y="158" font-size="11.200" font-weight="bold" font-family="Liberation Sans,sans-serif" fill="#e8e4dc" stroke="#e8e4dc" stroke-width="0.400" textLength="10.400" lengthAdjust="spacingAndGlyphs">T</text><path d="M1169.500 149.300H1147Q1150 141 1153 140.500Q1156 141 1158.500 149.300Q1161 157.500 1164 157.800Q1167 157 1169.500 149.300" stroke="#e8e4dc" stroke-width="1.200" fill="none" stroke-linejoin="round"/></svg>
<div style="left:59px;top:918px;width:2px;height:18px;background:#a76ba6"></div>
<div style="left:61px;top:918px;width:20px;height:16px;border-right:1px solid #2a2e6e;border-bottom:1px solid #2a2e6e"></div>
<svg style="left:61px;top:918px" width="20" height="15" viewBox="0 0 20 15"><path d="M12 3.500V11.500L7.500 7.500Z" fill="#000"/></svg>
<div class="btn" style="left:1135px;top:918px;width:20px;height:16px"></div>
<div class="btn" style="left:1155px;top:918px;width:20px;height:16px"></div>
<svg style="left:1155px;top:918px" width="20" height="15" viewBox="0 0 20 15"><path d="M8 3.500V11.500L12.500 7.500Z" fill="#000"/></svg>
<div class="hl" style="left:78px;top:934px;width:1px;height:3px"></div><div class="hl" style="left:104px;top:934px;width:1px;height:3px"></div><div class="hl" style="left:127px;top:934px;width:1px;height:3px"></div><div class="hl" style="left:147px;top:934px;width:1px;height:3px"></div><div class="hl" style="left:281px;top:934px;width:1px;height:3px"></div><div class="hl" style="left:360px;top:934px;width:1px;height:3px"></div><div class="hl" style="left:416px;top:934px;width:1px;height:3px"></div><div class="hl" style="left:459px;top:934px;width:1px;height:3px"></div><div class="hl" style="left:494px;top:934px;width:1px;height:3px"></div><div class="hl" style="left:524px;top:934px;width:1px;height:3px"></div><div class="hl" style="left:550px;top:934px;width:1px;height:3px"></div><div class="hl" style="left:573px;top:934px;width:1px;height:3px"></div><div class="hl" style="left:594px;top:934px;width:1px;height:3px"></div><div class="hl" style="left:728px;top:934px;width:1px;height:3px"></div><div class="hl" style="left:807px;top:934px;width:1px;height:3px"></div><div class="hl" style="left:862px;top:934px;width:1px;height:3px"></div><div class="hl" style="left:906px;top:934px;width:1px;height:3px"></div><div class="hl" style="left:941px;top:934px;width:1px;height:3px"></div><div class="hl" style="left:971px;top:934px;width:1px;height:3px"></div><div class="hl" style="left:997px;top:934px;width:1px;height:3px"></div><div class="hl" style="left:1020px;top:934px;width:1px;height:3px"></div><div class="hl" style="left:1040px;top:934px;width:1px;height:3px"></div>
<span class="t xl" style="left:103.6px;top:939px;font-size:12.3px;transform:translateX(-50%)">80</span>
<span class="t xl" style="left:146.6px;top:939px;font-size:12.3px;transform:translateX(-50%)">100</span>
<span class="t xl" style="left:280.6px;top:939px;font-size:12.3px;transform:translateX(-50%)">200</span>
<span class="t xl" style="left:359.6px;top:939px;font-size:12.3px;transform:translateX(-50%)">300</span>
<span class="t xl" style="left:415.6px;top:939px;font-size:12.3px;transform:translateX(-50%)">400</span>
<span class="t xl" style="left:458.6px;top:939px;font-size:12.3px;transform:translateX(-50%)">500</span>
<span class="t xl" style="left:493.6px;top:939px;font-size:12.3px;transform:translateX(-50%)">600</span>
<span class="t xl" style="left:549.6px;top:939px;font-size:12.3px;transform:translateX(-50%)">800</span>
<span class="t xl" style="left:593.6px;top:939px;font-size:12.3px;transform:translateX(-50%)">1.0k</span>
<span class="t xl" style="left:727.6px;top:939px;font-size:12.3px;transform:translateX(-50%)">2.0k</span>
<span class="t xl" style="left:806.6px;top:939px;font-size:12.3px;transform:translateX(-50%)">3.0k</span>
<span class="t xl" style="left:861.6px;top:939px;font-size:12.3px;transform:translateX(-50%)">4.0k</span>
<span class="t xl" style="left:905.6px;top:939px;font-size:12.3px;transform:translateX(-50%)">5.0k</span>
<span class="t xl" style="left:940.6px;top:939px;font-size:12.3px;transform:translateX(-50%)">6.0k</span>
<span class="t xl" style="left:996.6px;top:939px;font-size:12.3px;transform:translateX(-50%)">8.0k</span>
<span class="t xl" style="left:1039.6px;top:939px;font-size:12.3px;transform:translateX(-50%)">10.0k</span>
<span class="t" style="left:599px;top:951px;font-size:12.3px;transform-origin:0 0;transform:scaleX(0.9675);">Frequency (Hz)</span>
<div class="sf" style="left:4px;width:118px"></div>
<span class="t" style="left:8.2px;top:971px;font-size:12.3px;">Stopped</span>
<div class="sf" style="left:124px;width:100px"></div>
<span class="t" style="left:128.2px;top:971px;font-size:12.3px;">Real Time</span>
<div class="sf" style="left:227px;width:71px"></div>
<span class="t" style="left:231.2px;top:971px;font-size:12.3px;">96000 Hz</span>
<div class="sf" style="left:300px;width:51px"></div>
<span class="t" style="left:304.2px;top:971px;font-size:12.3px;">24 Bit</span>
<div class="sf" style="left:353px;width:60px"></div>
<span class="t" style="left:357.2px;top:971px;font-size:12.3px;">Stereo</span>
<div class="sf" style="left:416px;width:100px"></div>
<span class="t" style="left:420.2px;top:971px;font-size:12.3px;">FFT 65536 pts</span>
<div class="sf" style="left:519px;width:73px"></div>
<span class="t" style="left:523.2px;top:971px;font-size:12.3px;">Hamming</span>
<div class="hl" style="left:63px;top:993px;width:1px;height:2px"></div>
<span class="t" style="left:1203.5px;top:122px;font-size:12.3px;transform-origin:0 0;transform:scaleX(0.9500);text-decoration:underline;text-underline-offset:1px;">Overlays</span>
<span class="t" style="left:1183.59px;top:152.5px;font-size:12.3px;transform-origin:0 0;transform:rotate(-90deg)">Set</span>
<span class="t" style="left:1199.09px;top:152.5px;font-size:12.3px;transform-origin:0 0;transform:rotate(-90deg)">On</span>
<div class="btn" style="left:1182px;top:157px;width:14px;height:13px"></div>
<span class="t" style="left:1185.5px;top:157px;font-size:12.3px;">1</span>
<div class="cb" style="left:1200px;top:157px"></div>
<svg style="left:1202px;top:159px" width="10" height="10" viewBox="0 0 10 10"><path d="M1 4L3.500 6.500L8.500 1.500" stroke="#000" stroke-width="2" fill="none"/></svg>
<span class="t" style="left:1215.5px;top:158px;font-size:12.3px;transform-origin:0 0;transform:scaleX(0.9309);color:#f00808;">Overlay 1</span>
<div class="btn" style="left:1182px;top:173px;width:14px;height:13px"></div>
<span class="t" style="left:1185.5px;top:173px;font-size:12.3px;">2</span>
<div class="cb" style="left:1200px;top:173px"></div>
<svg style="left:1202px;top:175px" width="10" height="10" viewBox="0 0 10 10"><path d="M1 4L3.500 6.500L8.500 1.500" stroke="#000" stroke-width="2" fill="none"/></svg>
<span class="t" style="left:1215.5px;top:174px;font-size:12.3px;transform-origin:0 0;transform:scaleX(0.9309);color:#a870b0;">Overlay 2</span>
<div class="btn" style="left:1182px;top:189px;width:14px;height:13px"></div>
<span class="t" style="left:1185.5px;top:189px;font-size:12.3px;">3</span>
<div class="cb" style="left:1200px;top:189px"></div>
<span class="t" style="left:1215.5px;top:190px;font-size:12.3px;transform-origin:0 0;transform:scaleX(0.9309);color:#222a6c;">Overlay 3</span>
<div class="btn" style="left:1182px;top:205px;width:14px;height:13px"></div>
<span class="t" style="left:1185.5px;top:205px;font-size:12.3px;">4</span>
<div class="cb" style="left:1200px;top:205px"></div>
<span class="t" style="left:1215.5px;top:206px;font-size:12.3px;transform-origin:0 0;transform:scaleX(0.9309);color:#86b0dc;">Overlay 4</span>
<div class="btn" style="left:1179px;top:220px;width:64px;height:19px"></div>
<span class="t" style="left:1185.6px;top:224px;font-size:12.3px;transform-origin:0 0;transform:scaleX(0.9688);">Options...</span>
<span class="t" style="left:1183.59px;top:553.5px;font-size:12.3px;transform-origin:0 0;transform:rotate(-90deg)">Set</span>
<span class="t" style="left:1199.09px;top:553.5px;font-size:12.3px;transform-origin:0 0;transform:rotate(-90deg)">On</span>
<div class="btn" style="left:1182px;top:558px;width:14px;height:13px"></div>
<span class="t" style="left:1185.5px;top:558px;font-size:12.3px;">1</span>
<div class="cb" style="left:1200px;top:558px"></div>
<svg style="left:1202px;top:560px" width="10" height="10" viewBox="0 0 10 10"><path d="M1 4L3.500 6.500L8.500 1.500" stroke="#000" stroke-width="2" fill="none"/></svg>
<span class="t" style="left:1215.5px;top:559px;font-size:12.3px;transform-origin:0 0;transform:scaleX(0.9309);color:#f00808;">Overlay 1</span>
<div class="btn" style="left:1182px;top:574px;width:14px;height:13px"></div>
<span class="t" style="left:1185.5px;top:574px;font-size:12.3px;">2</span>
<div class="cb" style="left:1200px;top:574px"></div>
<svg style="left:1202px;top:576px" width="10" height="10" viewBox="0 0 10 10"><path d="M1 4L3.500 6.500L8.500 1.500" stroke="#000" stroke-width="2" fill="none"/></svg>
<span class="t" style="left:1215.5px;top:575px;font-size:12.3px;transform-origin:0 0;transform:scaleX(0.9309);color:#a870b0;">Overlay 2</span>
<div class="btn" style="left:1182px;top:590px;width:14px;height:13px"></div>
<span class="t" style="left:1185.5px;top:590px;font-size:12.3px;">3</span>
<div class="cb" style="left:1200px;top:590px"></div>
<span class="t" style="left:1215.5px;top:591px;font-size:12.3px;transform-origin:0 0;transform:scaleX(0.9309);color:#222a6c;">Overlay 3</span>
<div class="btn" style="left:1182px;top:606px;width:14px;height:13px"></div>
<span class="t" style="left:1185.5px;top:606px;font-size:12.3px;">4</span>
<div class="cb" style="left:1200px;top:606px"></div>
<span class="t" style="left:1215.5px;top:607px;font-size:12.3px;transform-origin:0 0;transform:scaleX(0.9309);color:#86b0dc;">Overlay 4</span>
<div class="btn" style="left:1179px;top:621px;width:64px;height:19px"></div>
<span class="t" style="left:1185.6px;top:625px;font-size:12.3px;transform-origin:0 0;transform:scaleX(0.9688);">Options...</span>
<div style="left:1006px;top:33px;width:100px;height:111px;background:#d7d3cb;border:1px solid #000;border-bottom:none"></div>
<div style="left:1007px;top:34px;width:41px;height:23px;background:#a76ba6"></div>
<div style="left:1048px;top:34px;width:25px;height:23px;background:#86b0d5"></div>
<div class="hl" style="left:1006px;top:57px;width:100px;height:1px"></div>
<div style="left:1009px;top:35px;width:20px;height:20px;background:#d7d3cb;border:1px solid #000"></div>
<svg style="left:1009px;top:35px" width="20" height="20" viewBox="0 0 20 20"><path d="M2.500 12.500L7 7V12.500L12 7V12.500L17 7" stroke="#2a2e6e" stroke-width="1.1" fill="none"/></svg>
<span class="t" style="left:1032px;top:40px;font-size:13.4px;transform-origin:0 0;transform:scaleX(1.0010);font-weight:bold;color:#e2dee2;">Gene..</span>
<div style="left:1073px;top:34px;width:32px;height:23px;background:#d7d3cb"></div>
<div class="btn" style="left:1082px;top:36px;width:21px;height:19px"></div>
<svg style="left:1082px;top:36px" width="21" height="19" viewBox="0 0 21 19"><path d="M6.500 5L15 14M15 5L6.500 14" stroke="#000" stroke-width="2.2" fill="none"/></svg>
<div class="btn" style="left:1011px;top:62px;width:42px;height:26px"></div>
<span class="t" style="left:1020.1px;top:69px;font-size:12.3px;transform-origin:0 0;transform:scaleX(1.0016);">Run</span>
<div class="btn" style="left:1059px;top:62px;width:42px;height:26px"></div>
<span class="t" style="left:1064.7px;top:69px;font-size:12.3px;transform-origin:0 0;transform:scaleX(0.9964);">Level</span>
<div class="btn" style="left:1011px;top:92px;width:90px;height:26px"></div>
<span class="t" style="left:1032px;top:99px;font-size:12.3px;transform-origin:0 0;transform:scaleX(0.9906);">Details...</span>
<div style="left:1011px;top:122px;width:90px;height:22px;border:1px solid #000;border-bottom:none"></div>
<div style="left:1015px;top:124px;width:63px;height:20px;overflow:hidden"><span class="t" style="left:0.7px;top:4px;font-size:12.3px;">Freq Sweep</span></div>
<div class="btn" style="left:1079px;top:124px;width:20px;height:19px"></div>
<svg style="left:1081.500px;top:129.700px" width="14" height="8" viewBox="0 0 14 8"><path d="M2 1.500H12L7 6.500Z" fill="#000"/></svg>
</body></html>
